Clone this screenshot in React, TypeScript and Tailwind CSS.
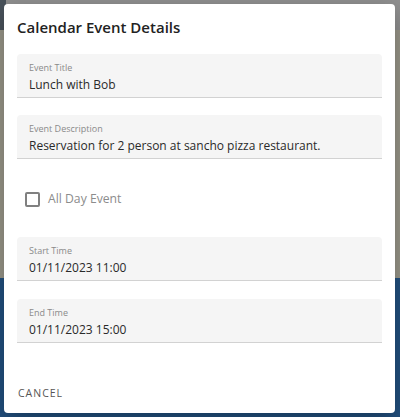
const fields = [
  { label: "Event Title", value: "Lunch with Bob" },
  { label: "Event Description", value: "Reservation for 2 person at sancho pizza restaurant." },
];

const times = [
  { label: "Start Time", value: "01/11/2023 11:00" },
  { label: "End Time", value: "01/11/2023 15:00" },
];

function Field({ label, value }: { label: string; value: string }) {
  return (
    <div className="h-[44px] bg-[#f5f5f5] rounded-t-[4px] border-b border-[#d2d2d2] px-3 pt-[7px]">
      <div className="text-[9px] leading-[12px] text-[#8a8a8a] pt-[1px]">{label}</div>
      <div className="text-[12px] leading-[18px] mt-[2px] text-[#2a2a2a] whitespace-nowrap">{value}</div>
    </div>
  );
}

export default function App() {
  return (
    <div className="relative w-[400px] h-[417px] overflow-hidden font-['Open_Sans',sans-serif]">
      {/* Backdrop */}
      <div className="absolute inset-0 flex flex-col">
        <div className="h-[30px] bg-[#909090] flex">
          <div className="w-[6px] bg-[#4a535c]"></div>
        </div>
        <div className="h-[248px] bg-[#9a978a]"></div>
        <div className="flex-1 bg-[#22507f]"></div>
      </div>

      {/* Dialog */}
      <div className="relative mt-[4px] ml-[4px] w-[391px] h-[409px] bg-white rounded-[4px] shadow-[0_8px_24px_rgba(0,0,0,0.3)] flex flex-col">
        <h2 className="px-[13px] pt-[11px] text-[15px] leading-[24px] font-semibold text-[#222]">
          Calendar Event Details
        </h2>

        <div className="px-[13px] mt-[15px] flex flex-col gap-[17px]">
          {fields.map((f) => (
            <Field key={f.label} label={f.label} value={f.value} />
          ))}
        </div>

        <label className="flex items-center gap-[8px] ml-[21px] mt-[31px] h-[18px]">
          <span className="w-[15px] h-[15px] border-2 border-[#808080] rounded-[2px]"></span>
          <span className="text-[12.2px] text-[#8c8c8c]">All Day Event</span>
        </label>

        <div className="px-[13px] mt-[29px] flex flex-col gap-[18px]">
          {times.map((f) => (
            <Field key={f.label} label={f.label} value={f.value} />
          ))}
        </div>

        <div className="mt-auto px-[14px] pb-[10px]">
          <button className="text-[10.5px] tracking-[1px] text-[#555] font-medium">CANCEL</button>
        </div>
      </div>
    </div>
  );
}
